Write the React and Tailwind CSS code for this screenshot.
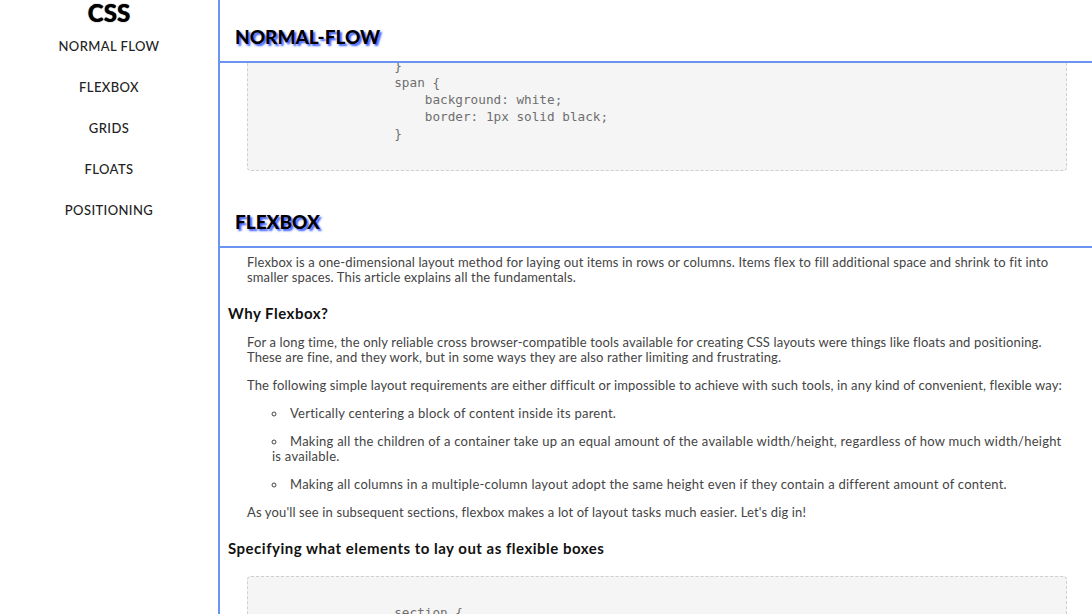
import React from "react";

const navItems = ["NORMAL FLOW", "FLEXBOX", "GRIDS", "FLOATS", "POSITIONING"];

function SectionHeader({ children }) {
  return (
    <div className="h-[63px] border-b-2 border-[#6b93f2] pl-[15px] flex items-center pt-[11px] shrink-0">
      <h2 className="text-[19px] font-black text-black tracking-[0px] [text-shadow:2px_2px_2px_#3a5cff] leading-none">
        {children}
      </h2>
    </div>
  );
}

function CodeBox({ lines, className = "" }) {
  return (
    <pre
      className={
        "ml-[27px] mr-[25px] rounded-[4px] border border-dashed border-[#cfcfcf] bg-[#f5f5f5] pl-[24px] pt-[27px] pb-[28px] text-[12.7px] leading-[17px] text-[#6f6f6f] tracking-normal " +
        className
      }
      style={{ fontFamily: '"DejaVu Sans Mono", "Liberation Mono", monospace' }}
    >
      {lines.join("\n")}
    </pre>
  );
}

export default function App() {
  const pad = "                ";
  return (
    <div
      className="flex h-[614px] w-full overflow-hidden bg-white"
      style={{ fontFamily: 'Lato, "Open Sans", sans-serif' }}
    >
      <aside className="w-[220px] shrink-0 border-r-2 border-[#6b93f2] flex flex-col items-center">
        <div className="h-[25px] leading-[25px] text-[24px] font-black text-black [text-shadow:0_0_1px_#000]">
          CSS
        </div>
        <nav className="flex flex-col items-center w-full pt-[1px]">
          {navItems.map((item) => (
            <div
              key={item}
              className="h-[41px] flex items-center justify-center text-[13px] font-medium text-[#222] tracking-[0.4px]"
            >
              {item}
            </div>
          ))}
        </nav>
      </aside>

      <main className="flex-1 min-w-0 flex flex-col">
        <SectionHeader>NORMAL-FLOW</SectionHeader>
        <div className="overflow-hidden shrink-0">
          <CodeBox
            className="-mt-[85px]"
            lines={[
              pad + "div {",
              pad + "    display: block;",
              pad + "    margin: 10px;",
              pad + "}",
              pad + "span {",
              pad + "    background: white;",
              pad + "    border: 1px solid black;",
              pad + "}",
            ]}
          />
        </div>

        <div className="mt-[14px]">
          <SectionHeader>FLEXBOX</SectionHeader>
        </div>

        <article className="pl-[8px] pt-[7px] text-[13px] leading-[15px] text-[#444] tracking-[0.14px]">
          <p className="ml-[19px] mr-[25px]">
            Flexbox is a one-dimensional layout method for laying out items in rows or columns. Items flex to fill additional space and shrink to fit into smaller spaces. This article explains all the fundamentals.
          </p>
          <h3 className="mt-[18px] text-[15px] leading-[20px] font-bold text-[#111] tracking-[0.5px]">Why Flexbox?</h3>
          <p className="mt-[12px] ml-[19px] mr-[25px]">
            For a long time, the only reliable cross browser-compatible tools available for creating CSS layouts were things like floats and positioning. These are fine, and they work, but in some ways they are also rather limiting and frustrating.
          </p>
          <p className="mt-[13px] ml-[19px] mr-[25px]">
            The following simple layout requirements are either difficult or impossible to achieve with such tools, in any kind of convenient, flexible way:
          </p>
          <ul className="ml-[19px] mr-[25px] pl-[25px] list-inside list-[circle] tracking-[0.25px]">
            <li className="mt-[13px]">Vertically centering a block of content inside its parent.</li>
            <li className="mt-[13px]">Making all the children of a container take up an equal amount of the available width/height, regardless of how much width/height is available.</li>
            <li className="mt-[13px]">Making all columns in a multiple-column layout adopt the same height even if they contain a different amount of content.</li>
          </ul>
          <p className="mt-[13px] ml-[19px] mr-[25px]">
            As you'll see in subsequent sections, flexbox makes a lot of layout tasks much easier. Let's dig in!
          </p>
          <h3 className="mt-[18px] text-[15px] leading-[20px] font-bold text-[#111] tracking-[0.5px]">
            Specifying what elements to lay out as flexible boxes
          </h3>
          <div className="mt-[18px] -ml-[8px]">
            <CodeBox
              lines={[pad + "section {", pad + "    display: flex;", pad + "}"]}
            />
          </div>
        </article>
      </main>
    </div>
  );
}
